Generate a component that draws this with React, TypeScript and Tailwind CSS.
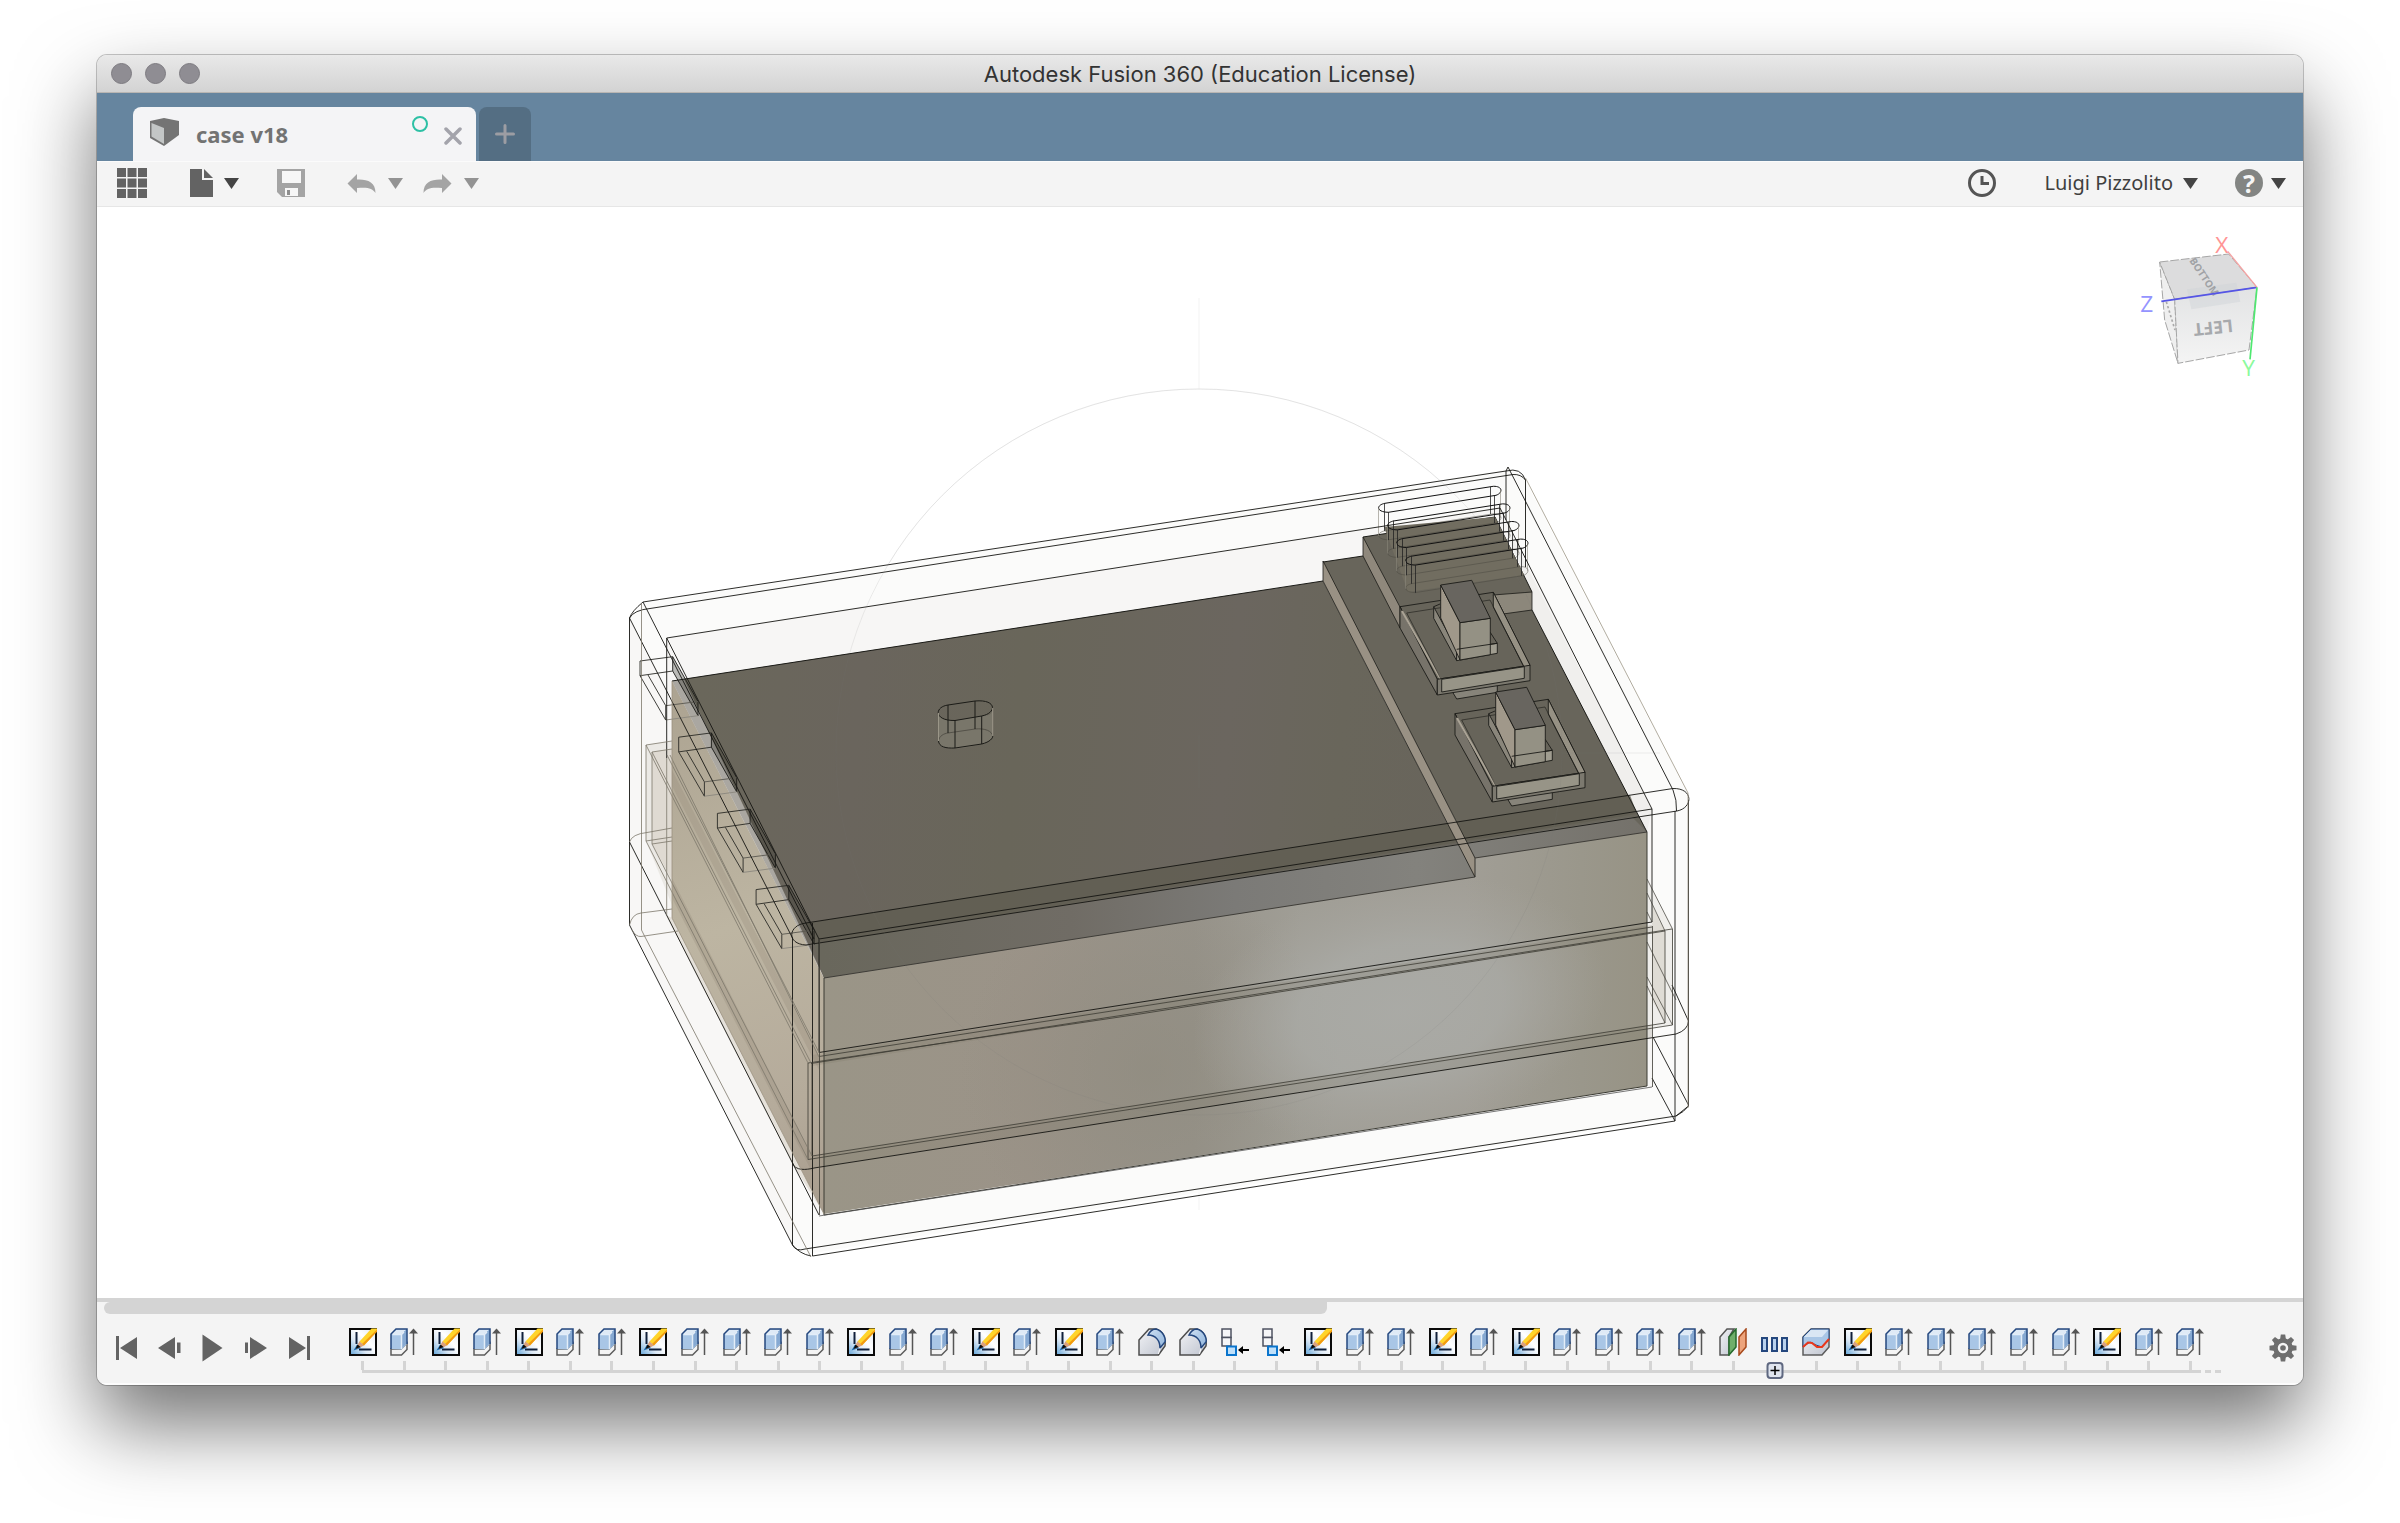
import React from "react";

type Kind = "sketch" | "extrude" | "fillet" | "component" | "plane" | "pattern" | "split";

const CODES: Record<string, Kind> = {
  S: "sketch",
  E: "extrude",
  F: "fillet",
  M: "component",
  P: "plane",
  T: "pattern",
  X: "split",
};

const FEATURES: Kind[] = "SESESEESEEEESEESESEFFMMSEESESEEEEPTXSEEEEESEE".split("").map((c) => CODES[c]);

const LABELS: Record<Kind, string> = {
  sketch: "Sketch",
  extrude: "Extrude",
  fillet: "Fillet",
  component: "Move component",
  plane: "Offset plane",
  pattern: "Pattern",
  split: "Split body",
};

function Gradients() {
  return (
    <svg className="absolute h-0 w-0" aria-hidden="true">
      <defs>
        <linearGradient id="paper" x1="0" y1="1" x2="1" y2="0">
          <stop offset="0" stopColor="#5fa3d8" />
          <stop offset="0.35" stopColor="#dbe8f5" />
          <stop offset="0.6" stopColor="#ffffff" />
          <stop offset="1" stopColor="#dfe8f2" />
        </linearGradient>
        <linearGradient id="steel" x1="0" y1="0" x2="1" y2="1">
          <stop offset="0" stopColor="#f2f3f6" />
          <stop offset="1" stopColor="#bfc4cf" />
        </linearGradient>
        <linearGradient id="sky" x1="0" y1="0" x2="1" y2="1">
          <stop offset="0" stopColor="#cfe0f2" />
          <stop offset="1" stopColor="#8fb4dc" />
        </linearGradient>
      </defs>
    </svg>
  );
}

function FeatureIcon({ kind }: { kind: Kind }) {
  return (
    <svg viewBox="0 0 28 28" className="size-7 shrink-0" aria-hidden="true">
      {kind === "sketch" && (
        <>
          <rect x="1" y="1" width="26" height="26" fill="url(#paper)" stroke="#0a0a0a" strokeWidth="2" />
          <path d="M7.5 4V16" stroke="#10203c" strokeWidth="2" />
          <path d="M10 21.5H22.5" stroke="#10203c" strokeWidth="2" />
          <path d="M4.5 22.5L8 16.5L12 20Z" fill="#1c6fb5" />
          <path d="M7 21L10.5 13.5L14.5 17.5Z" fill="#d99a70" />
          <path d="M10.5 13.5L22.5 0.5H28V3.5L15 17.5Z" fill="#ffd42a" />
          <path d="M15 17.5L28 3.5V1.5L13 16Z" fill="#f29a12" />
          <path d="M10.5 13.5L15 17.5L11.5 19L9 16.5Z" fill="#d9a07c" />
          <path d="M6.5 21L8.5 16.5L11.5 19Z" fill="#0a0a0a" />
        </>
      )}
      {kind === "extrude" && (
        <>
          <path d="M1 21H11L17 15V21.5L11.5 27H1Z" fill="#f4f4f4" stroke="#5c5c5c" strokeWidth="1.5" />
          <path d="M1 21V6L6 1H17V16L11.5 21.5Z" fill="#a9c6e6" />
          <path d="M1.5 6L6 1.5H16.5L11.5 6Z" fill="#dfeaf6" />
          <path d="M11.5 6L16.5 1.5V15.5L11.5 21Z" fill="#86a9d2" />
          <path d="M11.5 6.5V21M2.5 6.5H11.5L14 4" stroke="#e3edf8" strokeWidth="1.5" fill="none" />
          <path d="M1 21V6L6 1H17V16" fill="none" stroke="#24477e" strokeWidth="1.5" />
          <path d="M23.5 3V27" stroke="#555" strokeWidth="1.5" />
          <path d="M19 5.5L23.5 0.5L28 5.5Z" fill="#555" />
        </>
      )}
      {kind === "fillet" && (
        <>
          <path d="M1 12L11 1H18C25 3 28 10 27 18L20.5 27H1Z" fill="url(#steel)" stroke="#4c4c4c" strokeWidth="1.5" />
          <path d="M10 7C12 3 15 1 18 1C25 3 28 10 27 14L22 20C22 13 18 7 10 7Z" fill="url(#sky)" stroke="#24477e" strokeWidth="1.5" />
          <path d="M22 20L20.5 26" stroke="#fff" strokeWidth="1" />
        </>
      )}
      {kind === "component" && (
        <>
          <rect x="1" y="1" width="9" height="8.5" fill="#f6f6f8" stroke="#4e5260" strokeWidth="1.5" />
          <rect x="1" y="9.5" width="9" height="8.5" fill="#f6f6f8" stroke="#4e5260" strokeWidth="1.5" />
          <rect x="6" y="18.500" width="9" height="8.5" fill="#bfe0fa" stroke="#0a74cc" strokeWidth="2" />
          <path d="M18 22H28" stroke="#000" strokeWidth="2" />
          <path d="M17 22L22 18V26Z" fill="#000" />
        </>
      )}
      {kind === "plane" && (
        <>
          <path d="M1 27V9L8 1H15L10 9V27Z" fill="url(#steel)" stroke="#555" strokeWidth="1.5" />
          <path d="M10 27V9L17 1V19Z" fill="#6fae6a" stroke="#256b2c" strokeWidth="1.5" />
          <path d="M20 27V9L27 1V19Z" fill="#eda47c" stroke="#a84a1c" strokeWidth="1.5" />
        </>
      )}
      {kind === "pattern" && (
        <g fill="#b9d2ee" stroke="#24477e" strokeWidth="2">
          <rect x="1" y="10" width="5" height="13" />
          <rect x="11" y="10" width="5" height="13" />
          <rect x="21" y="10" width="5" height="13" />
        </g>
      )}
      {kind === "split" && (
        <>
          <path d="M1 9L9 1H27V19L20 27H1Z" fill="url(#steel)" stroke="#5c5c5c" strokeWidth="1.5" />
          <path d="M1 19V9L9 1H27V12L20 19L14 17L8 14Z" fill="#a9c6e6" stroke="#24477e" strokeWidth="1" />
          <path d="M2 9L9 2H26L20 9Z" fill="#d9e6f4" />
          <path d="M1 19L6 14.500L10 15L15 19H20L27 11" fill="none" stroke="#e8371c" strokeWidth="2" />
        </>
      )}
    </svg>
  );
}

function Caret({ className = "fill-[#444444]" }: { className?: string }) {
  return (
    <svg viewBox="0 0 15 11" className={"h-[11px] w-[15px] " + className} aria-hidden="true">
      <path d="M0 0H15L7.5 11Z" />
    </svg>
  );
}

const UNDO_PATH = "M0 9.500L9.500 0V5.500C20 5 28 8 28 19C25 14 20 13 9.500 14V19Z";

function TitleBar() {
  return (
    <header className="relative flex h-[38px] items-center justify-center border-b border-[#b9b6b3] bg-linear-to-b from-[#e9e9e9] to-[#d3d3d3]">
      <div className="absolute inset-y-0 left-[14px] flex items-center gap-[13px]">
        {["Close", "Minimize", "Zoom"].map((n) => (
          <button key={n} aria-label={n} className="size-[21px] rounded-full border border-[#7d7b80] bg-[#8f8d93]" />
        ))}
      </div>
      <h1 className="font-['Inter',sans-serif] text-[22px] leading-7 text-[#333333]">Autodesk Fusion 360 (Education License)</h1>
    </header>
  );
}

function DocumentTabs() {
  return (
    <nav aria-label="Documents" className="flex h-[68px] items-end gap-[3px] bg-[#66859f] pl-9">
      <div className="flex h-[54px] w-[343px] items-center rounded-t-lg bg-[#f4f4f6] pr-[14px] pl-[17px]">
        <svg viewBox="0 0 30 28" className="mb-1 h-7 w-[30px]" aria-hidden="true">
          <path d="M0 3L14 0L29 3V17L14 28L0 20Z" fill="#747474" />
          <path d="M1.500 5L14 10V26L1.500 18.500Z" fill="#c3c6c6" />
        </svg>
        <span className="ml-4 font-['Noto_Sans',sans-serif] text-[22px] leading-7 font-bold text-[#737373]">case v18</span>
        <span className="mr-4 mb-5 ml-auto size-4 rounded-full border-2 border-[#2dc0a5]" />
        <button aria-label="Close tab" className="mt-1">
          <svg viewBox="0 0 18 18" className="size-[18px]" aria-hidden="true">
            <path d="M2 2L16 16M16 2L2 16" stroke="#a3a3ab" strokeWidth="3.500" strokeLinecap="round" />
          </svg>
        </button>
      </div>
      <button aria-label="New tab" className="flex h-[54px] w-[52px] items-center justify-center rounded-t-lg bg-[#546e83]">
        <svg viewBox="0 0 20 20" className="size-5" aria-hidden="true">
          <path d="M10 1.500V18.500M1.500 10H18.500" stroke="#9c9da3" strokeWidth="3" strokeLinecap="round" />
        </svg>
      </button>
    </nav>
  );
}

function Toolbar() {
  return (
    <div role="toolbar" aria-label="Main" className="flex h-[46px] items-center border-t border-b border-t-[#fbfbfb] border-b-[#e6e6e6] bg-[#f4f4f4] pr-[17px] pb-0.5 pl-5">
      <button aria-label="Data panel">
        <svg viewBox="0 0 30 30" className="size-[30px] fill-[#636363]" aria-hidden="true">
          {[0, 10.5, 21].map((y) => [0, 10.5, 21].map((x) => <rect key={x + "-" + y} x={x} y={y} width="9" height="9" />))}
        </svg>
      </button>
      <button aria-label="File" className="ml-[43px] flex items-center gap-[11px]">
        <svg viewBox="0 0 23 28" className="h-7 w-[23px] fill-[#636363]" aria-hidden="true">
          <path d="M0 0H12V11H23V28H0Z" />
          <path d="M14 0L23 9H14Z" />
        </svg>
        <Caret />
      </button>
      <button aria-label="Save" className="ml-[38px]">
        <svg viewBox="0 0 28 28" className="size-7" aria-hidden="true">
          <path d="M0 0H28V28H5L0 23Z" fill="#a4a4a4" />
          <path d="M5 2H24V14H5ZM8 19H21V27H8Z" fill="#f7f7f7" />
          <rect x="10" y="21" width="3" height="5" fill="#8e8e8e" />
        </svg>
      </button>
      <button aria-label="Undo" className="ml-[42px] flex items-center gap-[12px]">
        <svg viewBox="0 0 28 19" className="h-[19px] w-[29px] fill-[#a4a4a4]" aria-hidden="true">
          <path d={UNDO_PATH} />
        </svg>
        <Caret className="fill-[#939393]" />
      </button>
      <button aria-label="Redo" className="ml-[20px] flex items-center gap-[12px]">
        <svg viewBox="0 0 28 19" className="h-[19px] w-[29px] fill-[#a4a4a4]" aria-hidden="true">
          <path d={UNDO_PATH} transform="matrix(-1 0 0 1 28 0)" />
        </svg>
        <Caret className="fill-[#939393]" />
      </button>
      <button aria-label="Job status" className="ml-auto">
        <svg viewBox="0 0 28 28" className="size-7" fill="none" stroke="#555" aria-hidden="true">
          <circle cx="14" cy="14" r="12.500" strokeWidth="3" />
          <path d="M14 7V14.500H21" strokeWidth="3" />
        </svg>
      </button>
      <button className="ml-[49px] flex items-center gap-[10px] font-['Noto_Sans',sans-serif] text-[20px] leading-7 text-[#3f3f3f]">
        Luigi Pizzolito
        <Caret />
      </button>
      <button aria-label="Help" className="ml-[37px] flex items-center gap-2">
        <span className="flex size-7 items-center justify-center rounded-full bg-[#838583] font-['Noto_Sans',sans-serif] text-[25px] leading-7 font-bold text-[#f6f6f6]">?</span>
        <Caret />
      </button>
    </div>
  );
}

/* Four-sided wire frames are drawn from one profile repeated along a vector. */
const SLOT_FRONT = "M640 661V675.700L665.700 720V705.700";
const SLOT_BACK = "M672.700 656.700L698 701.500V715.700L672.700 671Z";
const VENT = "M1385 503.300L1493.300 486.300C1503 486 1503 493 1496 495.300L1388.300 512.300C1376 512 1376 505 1385 503.300Z";

function Slot({ i }: { i: number }) {
  return (
    <g transform={`translate(${i * 38.7} ${i * 76.2})`} fill="none" strokeWidth="0.9">
      <path d={SLOT_BACK} fill="#2e2d27" fillOpacity="0.3" stroke="#1b1b17" />
      <path d={SLOT_FRONT} stroke="#2a2a26" />
      <path d="M648 675L665.700 705.700" stroke="#2a2a26" />
      <path d="M640 661L672.700 656.700M640 675.700L672.700 671" stroke="#2a2a26" />
      <path d="M665.700 705.700L698 701.500" stroke="#5a5850" />
      <path d="M665.700 720L698 715.700" stroke="#8a877e" />
    </g>
  );
}

function SlideSwitch() {
  return (
    <g stroke="#1b1b17" strokeWidth="0.9" strokeLinejoin="round">
      <path d="M1452.700 692.300L1456.700 699L1497.300 692.300V685L1456.700 690.700Z" fill="#87847a" />
      <path d="M1400 606.700L1493.300 592.300L1530 665.300L1437.300 679.300Z" fill="#67645a" fillOpacity="0.6" />
      <path d="M1400 606.700L1437.300 679.300V695L1400 628Z" fill="#77736a" />
      <path d="M1402 611L1441 680" fill="none" stroke="#aaa395" strokeWidth="2" />
      <path d="M1493.300 592.300L1530 665.300L1524 667L1493.300 607Z" fill="#969184" />
      <path d="M1437.300 679.300L1530 665.300V680.700L1437.300 695Z" fill="#7c796f" />
      <path d="M1441.700 679.300L1524.300 666.700V678.300L1441.700 692Z" fill="#979487" />
      <path d="M1406.700 613L1490 600L1524 667M1406.700 613L1441 679" fill="none" strokeWidth="0.6" />
      <path d="M1433.700 606.700L1433.700 618.300L1456.700 660.700V649.300Z" fill="#8a867b" />
      <path d="M1433.700 606.700L1440 604M1490 632L1497.300 643.300" fill="none" />
      <path d="M1456.700 649.300L1497.300 643.300V653.300L1456.700 660.700Z" fill="#a09d90" />
      <path d="M1440.700 585L1460 622.700V660L1440.700 618Z" fill="#a0988a" />
      <path d="M1460 622.700L1490.300 618.300V654.700L1460 660Z" fill="#949184" />
      <path d="M1440.700 585L1471.700 580.300L1490.300 618.300L1460 622.700Z" fill="#68655f" />
      <path d="M1456.700 649.300L1497.300 643.300" fill="none" />
    </g>
  );
}

function Model() {
  return (
    <svg viewBox="97 207 2206 1091" className="block h-full w-full" role="img" aria-label="Case model">
      <defs>
        <linearGradient id="side" x1="672" y1="700" x2="824" y2="1200" gradientUnits="userSpaceOnUse">
          <stop offset="0" stopColor="#ada492" />
          <stop offset="0.45" stopColor="#bdb5a2" />
          <stop offset="0.8" stopColor="#b5ab9b" />
          <stop offset="1" stopColor="#a99e8f" />
        </linearGradient>
        <linearGradient id="front" x1="824" y1="0" x2="1647" y2="0" gradientUnits="userSpaceOnUse">
          <stop offset="0" stopColor="#9a9587" />
          <stop offset="0.25" stopColor="#9b9388" />
          <stop offset="0.45" stopColor="#97938a" />
          <stop offset="0.58" stopColor="#a09e96" />
          <stop offset="0.78" stopColor="#a19e96" />
          <stop offset="0.92" stopColor="#9a978b" />
          <stop offset="1" stopColor="#979385" />
        </linearGradient>
        <radialGradient id="glow" cx="0" cy="0" r="1" gradientUnits="userSpaceOnUse" gradientTransform="translate(1400 1010) rotate(-12) scale(210 130)">
          <stop offset="0" stopColor="#abaca8" stopOpacity="0.85" />
          <stop offset="0.5" stopColor="#abaca8" stopOpacity="0.7" />
          <stop offset="1" stopColor="#a8a6a0" stopOpacity="0" />
        </radialGradient>
        <radialGradient id="shade" cx="1150" cy="1070" r="190" gradientUnits="userSpaceOnUse">
          <stop offset="0" stopColor="#8c887b" stopOpacity="0.5" />
          <stop offset="1" stopColor="#8c887b" stopOpacity="0" />
        </radialGradient>
        <linearGradient id="lid" x1="700" y1="680" x2="1500" y2="760" gradientUnits="userSpaceOnUse">
          <stop offset="0" stopColor="#6a675b" />
          <stop offset="0.2" stopColor="#6a655d" />
          <stop offset="0.4" stopColor="#69665a" />
          <stop offset="0.66" stopColor="#6b665f" />
          <stop offset="0.8" stopColor="#69665b" />
          <stop offset="1" stopColor="#68645c" />
        </linearGradient>
        <linearGradient id="rim" x1="824" y1="0" x2="1647" y2="0" gradientUnits="userSpaceOnUse">
          <stop offset="0" stopColor="#69675c" />
          <stop offset="0.3" stopColor="#706c65" />
          <stop offset="0.5" stopColor="#7b7a77" />
          <stop offset="0.72" stopColor="#83827d" />
          <stop offset="1" stopColor="#74716a" />
        </linearGradient>
      </defs>

      <g fill="none" stroke="#f3f3f3">
        <circle cx="1199" cy="752" r="363" />
        <path d="M1199 298V389M1199 1116V1210" />
      </g>

      {/* transparent shell */}
      <path d="M630 618L645 603L1506 470L1522 474L1688 795V1108L1676 1118L806 1254L793 1245L630 925Z" fill="#fbfbfa" fillOpacity="0.9" />
      <path d="M667 638L1500 508L1652 809V1087L819 1216L667 915Z" fill="#f7f6f5" />
      <path d="M630 618L667 690V915L793 1163V1245L630 925Z" fill="#f8f7f6" />
      <path d="M1532 610L1647 832L1652 809L1508 530Z" fill="#f0efed" />
      <path d="M646 745L672 741V905L646 841Z" fill="#ebe9e5" />
      <path d="M652 752L672 749V880L652 844Z" fill="#dfdad2" />
      <path d="M1647 879L1673 929V1025L1647 1028Z" fill="#efeeeb" />
      <path d="M1652 905L1665 931V1023L1652 1000Z" fill="#dfdcd5" />
      <path d="M672 918L824 1214L792 1163L666 915Z" fill="#e5e1da" />

      {/* solid body */}
      <path d="M672 681L824 978V1214L672 918Z" fill="url(#side)" />
      <path d="M672 770L819 1056V1070L672 786ZM672 878L812 1156V1172L672 898Z" fill="#8f8573" fillOpacity="0.25" />
      <path d="M672 681L700 677L819 939V968Z" fill="#5d584d" fillOpacity="0.5" />
      <path d="M824 978L1475 877V858L1647 832V1086L824 1214Z" fill="url(#front)" />
      <path d="M824 978L1475 877V858L1647 832V1086L824 1214Z" fill="url(#shade)" />
      <path d="M824 978L1475 877V858L1647 832V1086L824 1214Z" fill="url(#glow)" />
      <path d="M812 1055L1652 925V933L812 1066ZM812 1156L1652 1025V1038L812 1168Z" fill="#777160" fillOpacity="0.18" />
      <path d="M684 679L1323 581L1475 877L824 978Z" fill="url(#lid)" />
      <path d="M1323 562L1363 556V537L1495 517L1532 592V610L1647 832L1475 858Z" fill="#68655b" />
      <path d="M814 944L1632 817L1647 832L1475 858V877L824 978Z" fill="url(#rim)" />
      <path d="M806 923L1630 795L1637 814L814 944Z" fill="#605e51" fillOpacity="0.75" />
      <path d="M1323 561L1475 858V877L1323 581Z" fill="#999184" stroke="#1b1b17" strokeWidth="0.8" />
      <path d="M1363 537V556L1400 628V607Z" fill="#8f887c" stroke="#1b1b17" strokeWidth="0.8" />
      <path d="M1493 595L1532 592V610L1503 614Z" fill="#8c877b" stroke="#1b1b17" strokeWidth="0.8" />
      <path d="M672 681L1323 581M1323 562L1363 556M1363 537L1495 517L1532 592M1532 610L1647 832" fill="none" stroke="#1b1b17" />
      <path d="M824 978L1475 877M1475 858L1647 832" fill="none" stroke="#3f3d38" />
      <path d="M824 978V1215L1647 1086V832" fill="none" stroke="#3a3a32" />
      <path d="M819 1216L1652 1087" stroke="#555" strokeWidth="0.8" />

      {/* vents */}
      <path d="M1384 527L1495 517L1524 575L1408 592Z" fill="#716d60" />
      {[0, 1, 2, 3].map((i) => (
        <g key={i} transform={`translate(${i * 9} ${i * 17.6})`} fill="none">
          <path d={VENT} stroke="#111" />
          <path d={VENT} transform="translate(0 27.500)" stroke="#4a4840" strokeWidth="0.7" strokeOpacity="0.7" />
          <path d="M1384.500 503V531M1388.500 512V540M1490.500 487V514M1494.500 495V523" stroke="#222" strokeWidth="0.8" />
          <path d="M1378.500 508V536M1500.500 490V518" stroke="#8a867a" strokeWidth="0.6" />
        </g>
      ))}

      <SlideSwitch />
      <g transform="translate(55 107)">
        <SlideSwitch />
      </g>

      {/* screen opening */}
      <path d="M938.500 713V741C938 752 962 749 982 744C990 742 993 738 992.700 736V708C992 716 988 715 981.700 716L955 720.500C944 721 938 717 938.500 713Z" fill="#79766a" />
      <g fill="none" stroke="#1b1b17">
        <path d="M955 720.500C934 721 934 707 948 705L975 701C997 699 997 713 981.700 716Z" />
        <path d="M938.500 741C939 747 946 748.500 955 748L981.700 744C990 742 993 738 992.700 736" />
        <path d="M938.500 741C939 736 944 733.500 948 733L975 729C985 728 992 731 992.700 736" stroke="#4a4840" strokeWidth="0.8" />
        <path d="M955 720.500V748M948 705V733M975 701V729M981.700 716V744" />
        <path d="M938.500 713V741M992.700 708V736" stroke="#9a9688" />
      </g>

      {[0, 1, 2, 3].map((i) => (
        <Slot key={i} i={i} />
      ))}

      {/* shell edges */}
      <g fill="none" stroke="#151512" strokeWidth="0.9">
        <path d="M629.500 925V618Q632 611 643 602L1506 471Q1521 467 1525.500 480" />
        <path d="M629.500 618Q634 610 650 608.500L1513 474.500Q1521 474 1525.500 480V567" />
        <path d="M666.700 758V638L1500 508L1652 809" />
        <path d="M643 602L814 939M666.700 638L819 939M629.500 618L792.500 938" />
        <path d="M1506 520V471L1508 467L1673 790Q1677 800 1676.500 811" />
        <path d="M806 923L1673 788.500C1694 788 1693 808 1677 811L806 945C786 944 788 925 806 923Z" />
        <path d="M819 939L1652 809V922L819 1052.500Z" />
        <path d="M792.500 938V1245Q796 1252 805 1249L1676 1116L1688.500 1106V800" />
        <path d="M812.500 923V1256L1675 1121V811" />
        <path d="M792.500 1163C795 1171 806 1170 814 1168L1676 1034Q1688 1030 1688.500 1021L1672 985" />
        <path d="M629.500 842L792.500 1163M629.500 925L792.500 1245M792.500 1245Q800 1254 811 1256M792.500 1163L819 1215" />
        <path d="M1676 1116Q1684 1112 1688.500 1106M1653 1037L1688.500 1105M1652 1078L1675 1121" />
      </g>
      <g fill="none" stroke="#3c3b34" strokeWidth="0.8">
        <path d="M819 1056.500L1652 927M811 1063.500L1140 1012.500L1672 929M808 1063L1140 1014L1665 931" />
        <path d="M812 1156L1665 1023V931M808 1159.500L1672.500 1025V929" />
        <path d="M808 1063V1159.500M812 1063V1156M819.500 939V1215M1652.500 926V1087" />
        <path d="M1647 879L1672.500 929M1647 893L1665 931M1647 912L1652 922M1647 942L1676 1000M1647 977L1672.500 1025M1647 986L1665 1023" strokeWidth="0.7" />
      </g>
      <g fill="none" stroke="#7c776b" strokeWidth="0.8">
        <path d="M646 745V841L808 1159.500M652 752V844L812 1156M646 745L808 1063M652 752L811 1063M667 755L819 1052.500M670 755L819 1057" />
        <path d="M646 745L672 741M652 752L672 749M646 841L672 837M652 844L672 841" />
        <path d="M641.500 603V930L644.500 936L811 1257M666.700 758V915" />
        <path d="M629.500 842Q632 834 647 832.500L672 828M629.500 925Q632 914 641 913L672 909M632 930Q636 937 641 936.500L678 931" />
        <path d="M672 681V918L824 1214" stroke="#9a917f" />
        <path d="M1525.500 478L1688 793V1108" stroke="#9c9585" />
      </g>
      <g fill="none" stroke="#777" strokeOpacity="0.12">
        <circle cx="1199" cy="752" r="363" />
        <path d="M1562 753H1660M1199 735V788" />
      </g>
    </svg>
  );
}

function ViewCube() {
  return (
    <svg viewBox="700 570 402 480" className="absolute top-[23px] right-[36px] h-[160px] w-[134px] overflow-visible" role="img" aria-label="View cube">
      <defs>
        <linearGradient id="cubeFront" x1="0" y1="0" x2="0" y2="1">
          <stop offset="0" stopColor="#e2e3e4" />
          <stop offset="1" stopColor="#f4f4f4" />
        </linearGradient>
      </defs>
      <g stroke="#a6a6a6" strokeWidth="3" strokeDasharray="26 6">
        <path d="M780 666L825 778L835 970L795 840Z" fill="#efefef" />
        <path d="M780 666L987 642L1072 742L825 778Z" fill="#dcdcdd" />
        <path d="M825 778L1072 742L1048 930L835 970Z" fill="url(#cubeFront)" />
      </g>
      <path d="M862 748L1010 728L1022 785L875 808Z" fill="#cfd3d8" fillOpacity="0.45" />
      <path d="M800 785L826 870" stroke="#aaa" strokeWidth="5" strokeDasharray="7 7" />
      <g className="font-['Open_Sans',sans-serif]">
        <text x="998" y="838" fontSize="53" fontWeight="700" fill="#a7a9ac" transform="rotate(174 998 838)">LEFT</text>
        <text x="868" y="662" fontSize="30" fontWeight="700" fill="#a0a2a5" transform="rotate(56 868 662)">BOTTOM</text>
        <text x="947" y="638" fontSize="68" fill="#ff9494">X</text>
        <text x="722" y="815" fontSize="68" fill="#9494ff">Z</text>
        <text x="1028" y="1007" fontSize="68" fill="#8cfa9c">Y</text>
      </g>
      <path d="M785 784L1072 742" stroke="#5555e6" strokeWidth="5" />
      <path d="M984 634L1072 742" stroke="#f5a3a3" strokeWidth="4" />
      <path d="M1072 742L1051 958" stroke="#4fe870" strokeWidth="5" />
    </svg>
  );
}

const PLAYBACK: { label: string; width: string; box: string; d: string }[] = [
  { label: "Go to start", width: "w-[21px]", box: "0 0 21 28", d: "M0 2H3V26H0ZM21 3V25L4 14Z" },
  { label: "Step back", width: "w-[23px]", box: "0 0 23 28", d: "M17 3V25L0 14ZM19 8.500H22.500V19H19Z" },
  { label: "Play", width: "w-[21px]", box: "0 0 21 28", d: "M0.500 0.500V27.500L20.500 14Z" },
  { label: "Step forward", width: "w-[23px]", box: "0 0 23 28", d: "M6 3V25L23 14ZM1 8.500H4V19H1Z" },
  { label: "Go to end", width: "w-[22px]", box: "0 0 22 28", d: "M19 2H22V26H19ZM1 3V25L18 14Z" },
];

function Timeline() {
  return (
    <footer className="h-[87px] border-t-4 border-[#d4d4d4] bg-[#f4f4f4] shadow-[inset_0_-2px_0_#fcfcfc]">
      <div className="h-3 px-[7px]">
        <div className="h-3 w-[55.8%] rounded-b-md rounded-tl-md bg-[#d4d4d4]" />
      </div>
      <div className="flex items-start pt-[14px] pl-[19px]">
        <div className="mt-[6px] flex shrink-0 items-center gap-[21px]">
          {PLAYBACK.map((p) => (
            <button key={p.label} aria-label={p.label}>
              <svg viewBox={p.box} className={"h-7 fill-[#636363] " + p.width} aria-hidden="true">
                <path d={p.d} />
              </svg>
            </button>
          ))}
        </div>
        <div className="ml-8 min-w-0 flex-1">
          <ol className="flex">
            {FEATURES.map((kind, i) => (
              <li key={i} className="flex min-w-0 flex-1 flex-col items-center">
                <button aria-label={LABELS[kind]} className="h-7">
                  <FeatureIcon kind={kind} />
                </button>
                {kind === "pattern" ? (
                  <span className="relative mt-[5px] h-[9px] w-[3px]">
                    <button aria-label="Expand group" className="absolute top-[1px] left-1/2 size-[17px] -translate-x-1/2 rounded-sm border-2 border-[#5f6880] bg-[#dfe4ee]">
                      <svg viewBox="0 0 13 13" className="size-[13px]" aria-hidden="true">
                        <path d="M6.500 2V11M2 6.500H11" stroke="#000" strokeWidth="1.500" />
                      </svg>
                    </button>
                  </span>
                ) : (
                  <span className="mt-[5px] h-[9px] w-[3px] bg-[#d4d4d4]" />
                )}
              </li>
            ))}
          </ol>
          <div className="mr-[-10px] ml-5 flex gap-1">
            <span className="h-[3px] flex-1 bg-[#d4d4d4]" />
            <span className="h-[3px] w-[6px] bg-[#d4d4d4]" />
            <span className="h-[3px] w-[6px] bg-[#d4d4d4]" />
          </div>
        </div>
        <button aria-label="Timeline settings" className="mt-[6px] mr-[6px] ml-[58px] shrink-0">
          <svg viewBox="-14 -14 28 28" className="size-7" aria-hidden="true">
            <g fill="#6e6e6e">
              {[0, 45, 90, 135, 180, 225, 270, 315].map((a) => (
                <path key={a} d="M-3 -8L-2.200 -13.500H2.200L3 -8Z" transform={`rotate(${a})`} />
              ))}
            </g>
            <circle r="7.500" fill="none" stroke="#6e6e6e" strokeWidth="4.500" />
            <circle r="2.800" fill="#6e6e6e" />
          </svg>
        </button>
      </div>
    </footer>
  );
}

export default function App() {
  return (
    <div className="flex min-h-screen flex-col bg-white px-[97px] pt-[55px] pb-[138px]">
      <Gradients />
      <div className="flex flex-1 flex-col overflow-hidden rounded-[10px] shadow-[0_0_0_1px_rgba(0,0,0,0.22),0_40px_80px_rgba(0,0,0,0.55)]">
        <TitleBar />
        <DocumentTabs />
        <Toolbar />
        <main className="relative min-h-0 flex-1 basis-0 bg-white">
          <Model />
          <ViewCube />
        </main>
        <Timeline />
      </div>
    </div>
  );
}
